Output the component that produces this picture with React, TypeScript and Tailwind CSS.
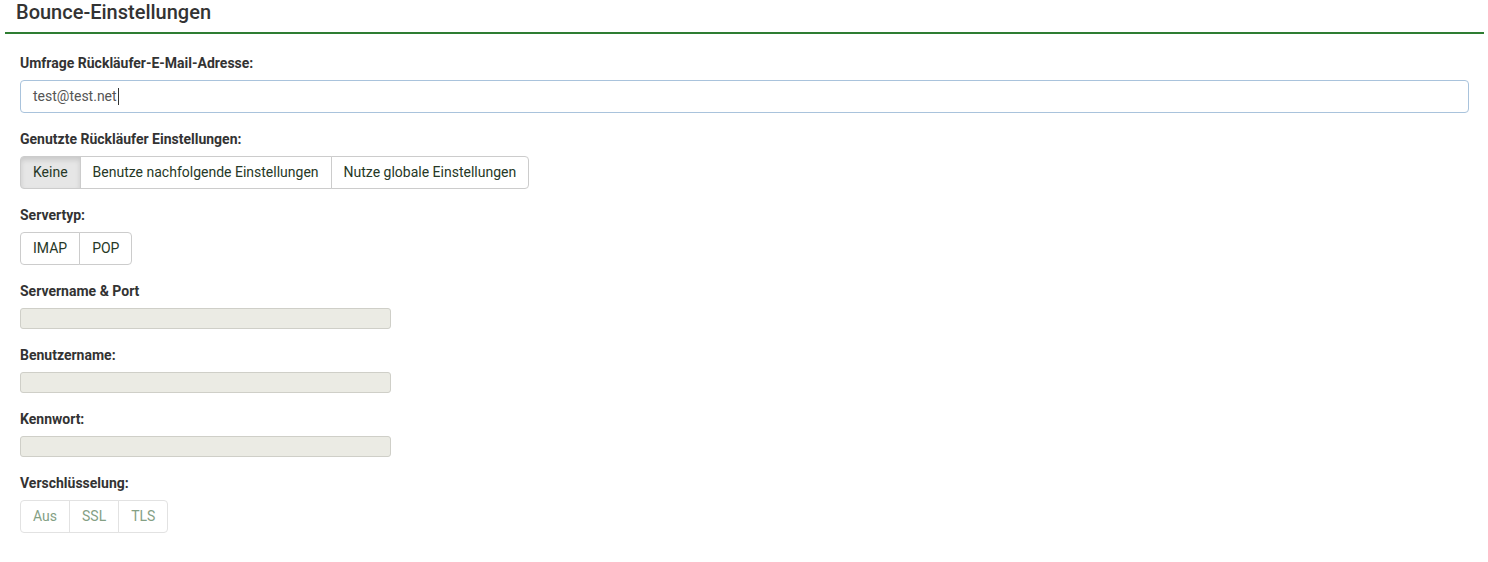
import React from "react";

const font = { fontFamily: "Roboto, 'Liberation Sans', sans-serif" };

function Label({ children }: { children: React.ReactNode }) {
  return (
    <div className="text-[14px] font-bold leading-[20px] text-[#333] mb-[7px]">
      {children}
    </div>
  );
}

function BtnGroup({
  items,
  active,
  disabled,
}: {
  items: string[];
  active?: number;
  disabled?: boolean;
}) {
  return (
    <div className="inline-flex">
      {items.map((t, i) => (
        <div
          key={t}
          className={[
            "h-[33px] px-3 flex items-center text-[14px] border -ml-px first:ml-0 first:rounded-l-[4px] last:rounded-r-[4px]",
            disabled
              ? "border-[#e2e2e2] text-[#84a084] bg-white"
              : "border-[#cccccc] text-[#263826]",
            i === active
              ? "bg-[#e6e6e6] shadow-[inset_0_3px_5px_rgba(0,0,0,0.125)] text-[#1f3347]"
              : !disabled
              ? "bg-white"
              : "",
          ].join(" ")}
        >
          {t}
        </div>
      ))}
    </div>
  );
}

function DisabledInput() {
  return (
    <div className="w-[371px] h-[21px] bg-[#ebebe4] border border-[#cfcfc8] rounded-[3px]" />
  );
}

export default function App() {
  return (
    <div className="bg-white w-[1488px] h-[562px]" style={font}>
      <div className="ml-[5px] mr-[4px] border-b-2 border-[#2e7d32] pl-[11px] pb-[8px]">
        <h2 className="text-[20px] leading-6 text-[#333] font-medium">Bounce-Einstellungen</h2>
      </div>

      <div className="pl-5 pr-[19px] pt-[19px] flex flex-col gap-[16px]">
        <div>
          <Label>Umfrage Rückläufer-E-Mail-Adresse:</Label>
          <div className="h-[33px] border border-[#a9c3dc] rounded-[4px] px-3 flex items-center text-[14px] text-[#555]">
            test@test.net
            <span className="inline-block w-px h-[17px] bg-[#333] ml-[1px]" />
          </div>
        </div>

        <div>
          <Label>Genutzte Rückläufer Einstellungen:</Label>
          <BtnGroup
            items={["Keine", "Benutze nachfolgende Einstellungen", "Nutze globale Einstellungen"]}
            active={0}
          />
        </div>

        <div>
          <Label>Servertyp:</Label>
          <BtnGroup items={["IMAP", "POP"]} />
        </div>

        <div>
          <Label>Servername &amp; Port</Label>
          <DisabledInput />
        </div>

        <div>
          <Label>Benutzername:</Label>
          <DisabledInput />
        </div>

        <div>
          <Label>Kennwort:</Label>
          <DisabledInput />
        </div>

        <div>
          <Label>Verschlüsselung:</Label>
          <BtnGroup items={["Aus", "SSL", "TLS"]} disabled />
        </div>
      </div>
    </div>
  );
}
